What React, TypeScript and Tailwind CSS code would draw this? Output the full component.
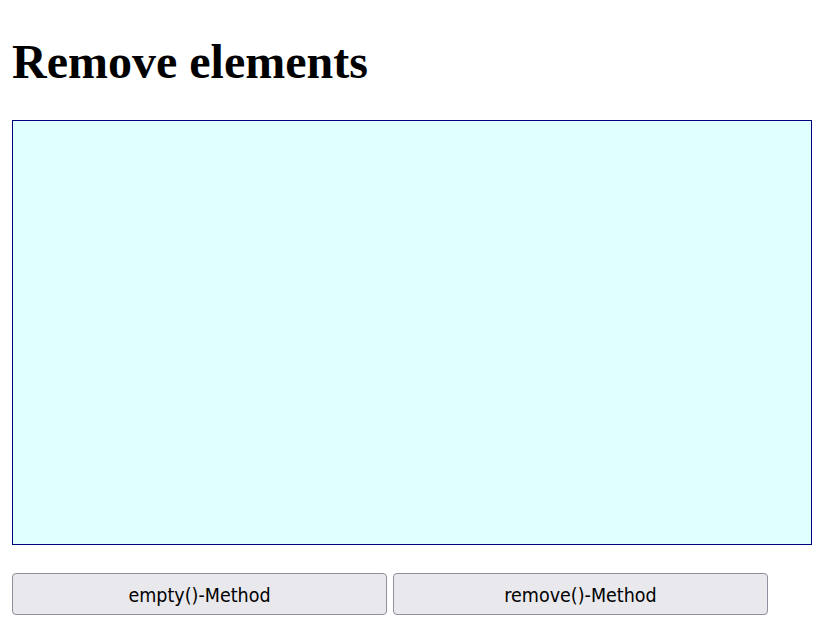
export default function App() {
  return (
    <div className="p-3 bg-white min-h-screen">
      <h1 className="font-['Liberation_Serif',serif] font-bold text-[48px] leading-[55px] mt-[22px] mb-[31px] text-black">
        Remove elements
      </h1>
      <div className="w-[800px] h-[425px] bg-[#e0ffff] border border-[#000080]" />
      <div className="flex gap-[6px] mt-[28px]">
        <button className="w-[375px] h-[42px] pt-[3px] bg-[#e9e9ed] border border-[#8f8f9d] rounded-[4px] font-['DejaVu_Sans_Condensed','DejaVu_Sans',sans-serif] text-[19.5px] text-black">
          empty()-Method
        </button>
        <button className="w-[375px] h-[42px] pt-[3px] bg-[#e9e9ed] border border-[#8f8f9d] rounded-[4px] font-['DejaVu_Sans_Condensed','DejaVu_Sans',sans-serif] text-[19.5px] text-black">
          remove()-Method
        </button>
      </div>
    </div>
  );
}
